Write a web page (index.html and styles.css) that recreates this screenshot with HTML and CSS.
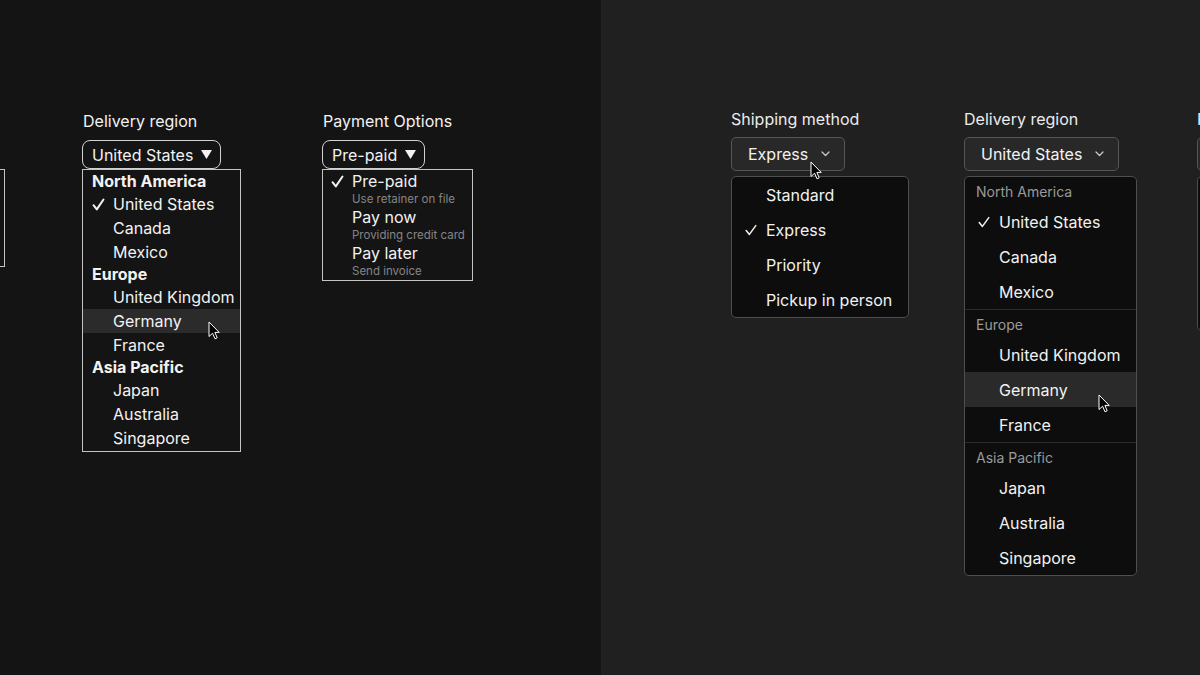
FILE: index.html
```html
<!DOCTYPE html>
<html lang="en">
<head>
    <meta charset="UTF-8">
    <meta name="viewport" content="width=device-width, initial-scale=1.0">
    <title>Select menus: native vs custom</title>
    <link rel="stylesheet" href="styles.css">
</head>
<body>
<div class="stage">

    <!-- Native browser select popups -->
    <section class="panel panel--native">
        <div class="row">
            <div class="field">
                <div class="field-label">Shipping method</div>
                <div class="native-btn">Express <svg class="caret" width="11" height="9" viewBox="0 0 11 9"><polygon points="0,0 11,0 5.5,9"/></svg></div>
                <div class="native-list native-list--ship">
                    <div class="native-opt"><span class="tick"></span>Standard</div>
                    <div class="native-opt"><span class="tick"><svg width="13" height="13" viewBox="0 0 13 13"><path d="M1.5 7.2 L4.8 11.4 L11.5 1.5"/></svg></span>Express</div>
                    <div class="native-opt"><span class="tick"></span>Priority</div>
                    <div class="native-opt"><span class="tick"></span>Pickup in person</div>
                </div>
            </div>

            <div class="field">
                <div class="field-label">Delivery region</div>
                <div class="native-btn">United States <svg class="caret" width="11" height="9" viewBox="0 0 11 9"><polygon points="0,0 11,0 5.5,9"/></svg></div>
                <div class="native-list native-list--region">
                    <div class="native-group">North America</div>
                    <div class="native-opt"><span class="tick"><svg width="13" height="13" viewBox="0 0 13 13"><path d="M1.5 7.2 L4.8 11.4 L11.5 1.5"/></svg></span>United States</div>
                    <div class="native-opt"><span class="tick"></span>Canada</div>
                    <div class="native-opt"><span class="tick"></span>Mexico</div>
                    <div class="native-group">Europe</div>
                    <div class="native-opt"><span class="tick"></span>United Kingdom</div>
                    <div class="native-opt is-hover"><span class="tick"></span>Germany
                        <svg class="cursor cursor--native" width="12" height="19" viewBox="0 0 12 19"><path d="M1 1 V15.5 L4.6 12.2 L7 17.8 L9.2 16.8 L6.9 11.4 H11.2 Z"/></svg>
                    </div>
                    <div class="native-opt"><span class="tick"></span>France</div>
                    <div class="native-group">Asia Pacific</div>
                    <div class="native-opt"><span class="tick"></span>Japan</div>
                    <div class="native-opt"><span class="tick"></span>Australia</div>
                    <div class="native-opt"><span class="tick"></span>Singapore</div>
                </div>
            </div>

            <div class="field">
                <div class="field-label">Payment Options</div>
                <div class="native-btn">Pre-paid <svg class="caret" width="11" height="9" viewBox="0 0 11 9"><polygon points="0,0 11,0 5.5,9"/></svg></div>
                <div class="native-list native-list--pay">
                    <div class="native-opt native-opt--rich">
                        <span class="tick"><svg width="13" height="13" viewBox="0 0 13 13"><path d="M1.5 7.2 L4.8 11.4 L11.5 1.5"/></svg></span>
                        <div>
                            <div class="opt-title">Pre-paid</div>
                            <div class="opt-sub">Use retainer on file</div>
                        </div>
                    </div>
                    <div class="native-opt native-opt--rich">
                        <span class="tick"></span>
                        <div>
                            <div class="opt-title">Pay now</div>
                            <div class="opt-sub">Providing credit card</div>
                        </div>
                    </div>
                    <div class="native-opt native-opt--rich">
                        <span class="tick"></span>
                        <div>
                            <div class="opt-title">Pay later</div>
                            <div class="opt-sub">Send invoice</div>
                        </div>
                    </div>
                </div>
            </div>
        </div>
    </section>

    <!-- Custom styled select popups -->
    <section class="panel panel--custom">
        <div class="row">
            <div class="field">
                <div class="field-label">Shipping method</div>
                <div class="custom-btn">Express <svg class="chevron" width="9" height="6" viewBox="0 0 9 6"><polyline points="1,1 4.5,4.5 8,1"/></svg>
                    <svg class="cursor cursor--btn" width="12" height="19" viewBox="0 0 12 19"><path d="M1 1 V15.5 L4.6 12.2 L7 17.8 L9.2 16.8 L6.9 11.4 H11.2 Z"/></svg>
                </div>
                <div class="custom-list">
                    <div class="custom-opt"><span class="tick"></span>Standard</div>
                    <div class="custom-opt"><span class="tick"><svg width="12" height="12" viewBox="0 0 12 12"><path d="M1.2 6.6 L4.4 10.4 L10.8 1.6"/></svg></span>Express</div>
                    <div class="custom-opt"><span class="tick"></span>Priority</div>
                    <div class="custom-opt"><span class="tick"></span>Pickup in person</div>
                </div>
            </div>

            <div class="field">
                <div class="field-label">Delivery region</div>
                <div class="custom-btn">United States <svg class="chevron" width="9" height="6" viewBox="0 0 9 6"><polyline points="1,1 4.5,4.5 8,1"/></svg></div>
                <div class="custom-list">
                    <div class="custom-group">
                        <div class="custom-group-title">North America</div>
                        <div class="custom-opt"><span class="tick"><svg width="12" height="12" viewBox="0 0 12 12"><path d="M1.2 6.6 L4.4 10.4 L10.8 1.6"/></svg></span>United States</div>
                        <div class="custom-opt"><span class="tick"></span>Canada</div>
                        <div class="custom-opt"><span class="tick"></span>Mexico</div>
                    </div>
                    <div class="custom-group">
                        <div class="custom-group-title">Europe</div>
                        <div class="custom-opt"><span class="tick"></span>United Kingdom</div>
                        <div class="custom-opt is-hover"><span class="tick"></span>Germany
                            <svg class="cursor cursor--custom" width="12" height="19" viewBox="0 0 12 19"><path d="M1 1 V15.5 L4.6 12.2 L7 17.8 L9.2 16.8 L6.9 11.4 H11.2 Z"/></svg>
                        </div>
                        <div class="custom-opt"><span class="tick"></span>France</div>
                    </div>
                    <div class="custom-group">
                        <div class="custom-group-title">Asia Pacific</div>
                        <div class="custom-opt"><span class="tick"></span>Japan</div>
                        <div class="custom-opt"><span class="tick"></span>Australia</div>
                        <div class="custom-opt"><span class="tick"></span>Singapore</div>
                    </div>
                </div>
            </div>

            <div class="field">
                <div class="field-label">Payment options</div>
                <div class="custom-btn">Pre-paid <svg class="chevron" width="9" height="6" viewBox="0 0 9 6"><polyline points="1,1 4.5,4.5 8,1"/></svg></div>
                <div class="custom-list">
                    <div class="custom-opt custom-opt--rich"><span class="tick"><svg width="12" height="12" viewBox="0 0 12 12"><path d="M1.2 6.6 L4.4 10.4 L10.8 1.6"/></svg></span>
                        <div><div>Pre-paid</div><div class="opt-sub">Use retainer on file</div></div>
                    </div>
                    <div class="custom-opt custom-opt--rich"><span class="tick"></span>
                        <div><div>Pay now</div><div class="opt-sub">Providing credit card</div></div>
                    </div>
                    <div class="custom-opt custom-opt--rich"><span class="tick"></span>
                        <div><div>Pay later</div><div class="opt-sub">Send invoice</div></div>
                    </div>
                </div>
            </div>
        </div>
    </section>

</div>
</body>
</html>
```

FILE: styles.css
```css
* {
    box-sizing: border-box;
}
html, body {
    margin: 0;
    padding: 0;
}
body {
    font-family: Inter, "Noto Sans", sans-serif;
    color: #f2f2f2;
    overflow: hidden;
}
.stage {
    display: flex;
    height: 675px;
}
.panel {
    overflow: hidden;
}
.panel--native {
    width: 601px;
    flex-shrink: 0;
    background-color: #141414;
}
.panel--custom {
    flex: 1;
    background-color: #202020;
}
.row {
    display: flex;
    align-items: flex-start;
}
.field {
    flex-shrink: 0;
}
.field-label {
    font-size: 16px;
    line-height: 20px;
}

/* native popups */
.panel--native .row {
    margin-left: -158px;
    padding-top: 111px;
}
.panel--native .field {
    width: 240px;
}
.panel--native .field-label {
    padding-left: 1px;
    margin-bottom: 9px;
}
.native-btn {
    display: flex;
    align-items: center;
    gap: 8px;
    width: max-content;
    height: 29px;
    padding: 0 8px 0 9px;
    border: 1px solid #d2d2d2;
    border-radius: 8px;
    font-size: 16px;
}
.caret {
    fill: #f2f2f2;
}
.native-list {
    border: 1px solid #c4c4c4;
    font-size: 16px;
}
.native-list--ship {
    width: 163px;
}
.native-list--region {
    width: 159px;
    padding: 1px 0;
}
.native-list--pay {
    width: 151px;
    padding-top: 2px;
}
.native-group {
    font-weight: 700;
    line-height: 21px;
    padding: 0 9px;
}
.native-opt {
    position: relative;
    display: flex;
    line-height: 24px;
    padding: 0 9px;
    white-space: nowrap;
}
.native-opt.is-hover {
    background-color: #2b2b2b;
}
.native-list--pay .native-opt {
    padding: 0 8px;
}
.opt-title {
    line-height: 18px;
}
.opt-sub {
    font-size: 11.5px;
    line-height: 18px;
    color: #858585;
}
.tick {
    display: flex;
    align-items: center;
    width: 21px;
    flex-shrink: 0;
}
.native-opt--rich .tick {
    align-items: flex-start;
    height: 18px;
    padding-top: 3px;
}
.tick svg {
    fill: none;
    stroke: #f2f2f2;
    stroke-width: 2;
    stroke-linecap: round;
    stroke-linejoin: round;
}

/* custom popups */
.panel--custom .row {
    padding-left: 130px;
    padding-top: 109px;
}
.panel--custom .field {
    width: 233px;
}
.panel--custom .field-label {
    color: #ececec;
    margin-bottom: 8px;
}
.custom-btn {
    position: relative;
    display: flex;
    align-items: center;
    gap: 13px;
    width: max-content;
    height: 34px;
    padding: 0 14px 0 16px;
    background-color: #282828;
    border: 1px solid #565656;
    border-radius: 5px;
    font-size: 16px;
}
.chevron {
    fill: none;
    stroke: #c8c8c8;
    stroke-width: 1.3;
    stroke-linecap: round;
    stroke-linejoin: round;
}
.custom-list {
    width: max-content;
    margin-top: 5px;
    background-color: #0d0d0d;
    border: 1px solid #4e4e4e;
    border-radius: 5px;
    overflow: hidden;
}
.custom-group + .custom-group {
    border-top: 1px solid #2a2a2a;
}
.custom-group-title {
    font-size: 14px;
    line-height: 16px;
    padding: 7px 11px 4px;
    color: #9a9a9a;
}
.custom-opt {
    position: relative;
    display: flex;
    align-items: center;
    height: 35px;
    padding: 0 16px 0 13px;
    font-size: 16px;
    white-space: nowrap;
}
.custom-opt.is-hover {
    background-color: #2a2a2a;
}
.custom-opt .tick svg {
    stroke-width: 1.5;
}
.custom-opt--rich {
    height: 51px;
}
.custom-opt--rich .opt-sub {
    font-size: 12px;
}

/* pointer overlays */
.cursor {
    position: absolute;
    fill: #000;
    stroke: #fff;
    stroke-width: 1;
    stroke-linejoin: round;
}
.cursor--native {
    left: 125px;
    top: 12px;
}
.cursor--btn {
    left: 78px;
    top: 23px;
}
.cursor--custom {
    left: 133px;
    top: 22px;
}
```
